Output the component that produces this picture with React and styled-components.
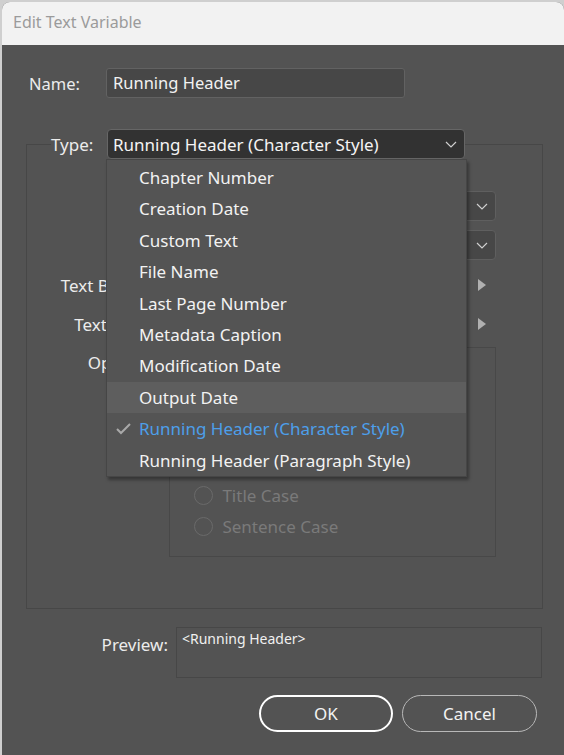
import React from 'react'
import styled, { createGlobalStyle } from 'styled-components'

const GlobalStyle = createGlobalStyle`
  html, body {
    margin : 0;
    padding : 0;
    background : #cfcfcf;
    font-family : "Noto Sans", "Open Sans", sans-serif;
  }
  * { box-sizing : border-box; }
`

const Dialog = styled.div`
  margin : 2px 0 0 2px;
  width : 562px;
  height : 753px;
  border-radius : 8px 8px 0 0;
  overflow : hidden;
  background : #535353;
  display : flex;
  flex-direction : column;
`
const TitleBar = styled.div`
  height : 43px;
  background : #f2f2f2;
  color : #9b9b9b;
  font-size : 16px;
  line-height : 41px;
  padding-left : 11px;
`
const Body = styled.div`
  position : relative;
  padding : 23px 21px 0 24px;
  display : flex;
  flex-direction : column;
  color : #ececec;
  font-size : 17px;
`
const Row = styled.div`
  display : flex;
  align-items : ${p => p.$top ? 'flex-start' : 'center'};
  gap : ${p => p.$gap || 0}px;
  margin-top : ${p => p.$mt || 0}px;
`
const Label = styled.div`
  width : ${p => p.$w}px;
  text-align : ${p => p.$align || 'left'};
  padding-left : ${p => p.$pad || 0}px;
  padding-top : ${p => p.$pt || 0}px;
  flex-shrink : 0;
  font-size : ${p => p.$fs || 17}px;
`
const TextField = styled.div`
  width : ${p => p.$w}px;
  height : 30px;
  line-height : 28px;
  padding-left : 6px;
  background : #474747;
  border : 1px solid #626262;
  border-radius : 3px;
  color : #f2f2f2;
  font-size : 16.5px;
  white-space : nowrap;
`
const SelectBox = styled.div`
  width : ${p => p.$w}px;
  height : 30px;
  padding : 0 7px 0 5px;
  display : flex;
  align-items : center;
  justify-content : space-between;
  background : ${p => p.$dark ? '#323232' : '#474747'};
  border : 1px solid ${p => p.$dark ? '#666' : '#5f5f5f'};
  border-radius : 4px;
  color : #f4f4f4;
  white-space : nowrap;
`
const Group = styled.fieldset`
  margin : 31px 0 0 0;
  padding : 32px 46px 51px 0;
  border : 1px solid #474747;
  min-width : 0;
`
const Legend = styled.legend`
  margin-left : 24px;
  padding : 0;
`
const TypeWrap = styled.div`
  position : relative;
`
const Menu = styled.div`
  position : absolute;
  left : -1px;
  top : 30px;
  width : 361px;
  padding-top : 2px;
  background : #545454;
  border : 1px solid #464646;
  box-shadow : 2px 3px 3px rgba(0,0,0,0.35);
  z-index : 5;
`
const MenuItem = styled.div`
  height : 31.4px;
  line-height : 32px;
  padding-left : 32px;
  position : relative;
  background : ${p => p.$hover ? '#5e5e5e' : 'transparent'};
  color : ${p => p.$checked ? '#4d9fea' : '#f2f2f2'};
  white-space : nowrap;
`
const Check = styled.svg`
  position : absolute;
  left : 9px;
  top : 10px;
`
const Fields = styled.div`
  display : flex;
  flex-direction : column;
`
const FieldRow = styled.div`
  display : flex;
  align-items : ${p => p.$top ? 'flex-start' : 'center'};
  height : ${p => p.$h || 30}px;
  margin-bottom : ${p => p.$mb || 0}px;
`
const FieldLabel = styled.div`
  width : 129px;
  margin-right : 14px;
  text-align : right;
  white-space : nowrap;
  padding-top : ${p => p.$top ? 4 : 0}px;
`
const Arrow = styled.div`
  width : 29px;
  display : flex;
  justify-content : center;
`
const OptionBox = styled.div`
  width : 328px;
  height : 210px;
  border : 1px solid #484848;
  padding : 8px 0 0 24px;
  display : flex;
  flex-direction : column;
`
const OptionRow = styled.div`
  height : 31px;
  display : flex;
  align-items : center;
  gap : 9px;
  padding-left : ${p => p.$indent || 0}px;
  color : #7a7a7a;
`
const Radio = styled.span`
  width : 19px;
  height : 19px;
  border-radius : 50%;
  border : 1px solid #6a6a6a;
`
const Box = styled.span`
  width : 17px;
  height : 17px;
  border-radius : 2px;
  border : 1px solid #6a6a6a;
`
const PreviewBox = styled.div`
  width : 366px;
  height : 51px;
  border : 1px solid #474747;
  padding : 1px 5px;
  font-size : 14px;
  color : #f0f0f0;
`
const Buttons = styled.div`
  display : flex;
  justify-content : flex-end;
  gap : 9px;
  margin : 17px 6px 0 0;
`
const Button = styled.div`
  width : ${p => p.$w}px;
  height : 37px;
  border-radius : 19px;
  border : ${p => p.$primary ? '2px solid #ffffff' : '1px solid #b8b8b8'};
  display : flex;
  align-items : center;
  justify-content : center;
  color : #f2f2f2;
`

const Chevron = () => (
  <svg width="12" height="7" viewBox="0 0 12 7">
    <polyline points="1,1 6,6 11,1" fill="none" stroke="#cfcfcf" strokeWidth="1.2" />
  </svg>
)
const Triangle = () => (
  <svg width="8" height="12" viewBox="0 0 8 12">
    <polygon points="0,0 8,6 0,12" fill="#b0b0b0" />
  </svg>
)

const items = [
  'Chapter Number', 'Creation Date', 'Custom Text', 'File Name', 'Last Page Number',
  'Metadata Caption', 'Modification Date', 'Output Date',
  'Running Header (Character Style)', 'Running Header (Paragraph Style)',
]

const App = () => {
  return (
    <>
      <GlobalStyle />
      <Dialog>
        <TitleBar>Edit Text Variable</TitleBar>
        <Body>
          <Row>
            <Label $w={80} $pad={3} $fs={16.5}>Name:</Label>
            <TextField $w={299}>Running Header</TextField>
          </Row>
          <Group>
            <Legend>
              <Row $gap={8}>
                <Label $w={48}>Type:</Label>
                <TypeWrap>
                  <SelectBox $dark $w={358}>
                    Running Header (Character Style)
                    <Chevron />
                  </SelectBox>
                  <Menu>
                    {items.map((item, index) =>
                      <MenuItem key={index} $hover={index === 7} $checked={index === 8}>
                        {index === 8 &&
                          <Check width="15" height="12" viewBox="0 0 15 12">
                            <polyline points="1,6 5,10 14,1" fill="none" stroke="#a9a9a9" strokeWidth="2" />
                          </Check>}
                        {item}
                      </MenuItem>)}
                  </Menu>
                </TypeWrap>
              </Row>
            </Legend>
            <Fields>
              <FieldRow $mb={9}>
                <FieldLabel>Style:</FieldLabel>
                <SelectBox $w={328}>[No Character Style]<Chevron /></SelectBox>
              </FieldRow>
              <FieldRow $mb={10}>
                <FieldLabel>Use:</FieldLabel>
                <SelectBox $w={328}>First on Page<Chevron /></SelectBox>
              </FieldRow>
              <FieldRow $mb={9}>
                <FieldLabel>Text Before:</FieldLabel>
                <TextField $w={299}></TextField>
                <Arrow><Triangle /></Arrow>
              </FieldRow>
              <FieldRow $mb={8}>
                <FieldLabel>Text After:</FieldLabel>
                <TextField $w={299}></TextField>
                <Arrow><Triangle /></Arrow>
              </FieldRow>
              <FieldRow $top $h={210}>
                <FieldLabel $top>Options:</FieldLabel>
                <OptionBox>
                  <OptionRow><Box />Delete End Punctuation</OptionRow>
                  <OptionRow><Box />Change Case</OptionRow>
                  <OptionRow><Radio />Upper Case</OptionRow>
                  <OptionRow><Radio />Lower Case</OptionRow>
                  <OptionRow><Radio />Title Case</OptionRow>
                  <OptionRow><Radio />Sentence Case</OptionRow>
                </OptionBox>
              </FieldRow>
            </Fields>
          </Group>
          <Row $top $mt={18} $gap={8}>
            <Label $w={142} $align="right" $pt={6}>Preview:</Label>
            <PreviewBox>&lt;Running Header&gt;</PreviewBox>
          </Row>
          <Buttons>
            <Button $primary $w={134}>OK</Button>
            <Button $w={135}>Cancel</Button>
          </Buttons>
        </Body>
      </Dialog>
    </>
  )
}

export default App
